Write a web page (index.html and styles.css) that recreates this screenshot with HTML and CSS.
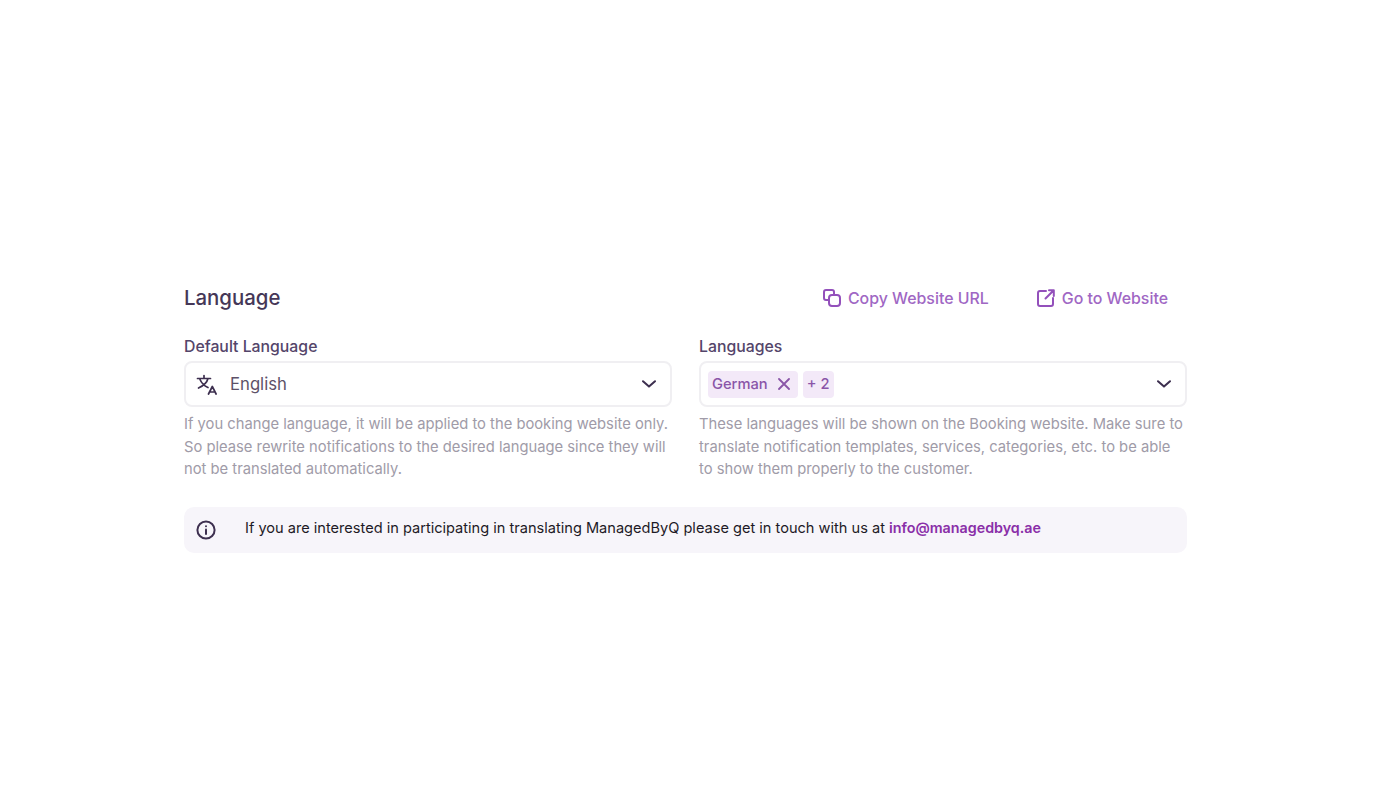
FILE: index.html
```html
<!DOCTYPE html>
<html lang="en">
<head>
    <meta charset="UTF-8">
    <meta name="viewport" content="width=device-width, initial-scale=1.0">
    <title>Language</title>
    <link rel="stylesheet" href="styles.css">
</head>
<body>
    <div class="container">
        <div class="header">
            <h1>Language</h1>
            <div class="header-links">
                <a class="link" href="#">
                    <svg width="20" height="20" viewBox="0 0 20 20" fill="none" stroke="currentColor" stroke-width="2" stroke-linejoin="round" stroke-linecap="round">
                        <path d="M12 6.5V4a2 2 0 0 0-2-2H4a2 2 0 0 0-2 2v6a2 2 0 0 0 2 2h2.5"/>
                        <rect x="7" y="7" width="11" height="11" rx="3"/>
                    </svg>
                    Copy Website URL
                </a>
                <a class="link" href="#">
                    <svg width="20" height="20" viewBox="0 0 20 20" fill="none" stroke="currentColor" stroke-width="2" stroke-linejoin="round" stroke-linecap="round">
                        <path d="M10 3H4a2 2 0 0 0-2 2v11a2 2 0 0 0 2 2h11a2 2 0 0 0 2-2v-6"/>
                        <path d="M9.5 10.5L17.5 2.5M13 2.2h4.8V8"/>
                    </svg>
                    Go to Website
                </a>
            </div>
        </div>

        <div class="columns">
            <div class="field">
                <label>Default Language</label>
                <div class="select">
                    <svg class="translate-icon" width="22" height="22" viewBox="0 0 22 22" fill="none" stroke="currentColor" stroke-width="1.7" stroke-linecap="round" stroke-linejoin="round">
                        <path d="M1.5 5.5h13M8 2.5v3M12 5.5C11 9.5 7 13 2.5 15M4 6.5c1.5 3.5 4.5 6.5 8 8"/>
                        <path d="M12.5 21l3.8-7.5 3.8 7.5M13.8 19h5"/>
                    </svg>
                    <span class="select-value">English</span>
                    <svg class="chevron" width="14" height="8" viewBox="0 0 14 8" fill="none" stroke="currentColor" stroke-width="2" stroke-linecap="round" stroke-linejoin="round">
                        <path d="M1 1.2l6 5.4 6-5.4"/>
                    </svg>
                </div>
                <p class="hint">If you change language, it will be applied to the booking website only. So please rewrite notifications to the desired language since they will not be translated automatically.</p>
            </div>

            <div class="field">
                <label>Languages</label>
                <div class="select select-tags">
                    <span class="tag">German
                        <svg width="12" height="12" viewBox="0 0 12 12" fill="none" stroke="currentColor" stroke-width="1.8" stroke-linecap="round">
                            <path d="M1 1l10 10M11 1L1 11"/>
                        </svg>
                    </span>
                    <span class="tag tag-more">+ 2</span>
                    <svg class="chevron" width="14" height="8" viewBox="0 0 14 8" fill="none" stroke="currentColor" stroke-width="2" stroke-linecap="round" stroke-linejoin="round">
                        <path d="M1 1.2l6 5.4 6-5.4"/>
                    </svg>
                </div>
                <p class="hint">These languages will be shown on the Booking website. Make sure to translate notification templates, services, categories, etc. to be able to show them properly to the customer.</p>
            </div>
        </div>

        <div class="banner">
            <svg width="20" height="20" viewBox="0 0 20 20" fill="none" stroke="currentColor" stroke-width="2" stroke-linecap="round">
                <circle cx="10" cy="10" r="8.6"/>
                <path d="M10 9.5v4.5"/>
                <path d="M10 6.2v.1"/>
            </svg>
            <span class="banner-text">If you are interested in participating in translating ManagedByQ please get in touch with us at <a href="#">info@managedbyq.ae</a></span>
        </div>
    </div>
</body>
</html>
```

FILE: styles.css
```css
body {
    font-family: Inter, "Liberation Sans", sans-serif;
    margin: 0;
    padding: 284px 213px 0 184px;
    background-color: #fff;
    color: #3a2a4a;
}

.header {
    display: flex;
    justify-content: space-between;
    align-items: center;
    height: 28px;
    padding-right: 19px;
    margin-bottom: 25px;
}

h1 {
    font-size: 20.4px;
    font-weight: 500;
    margin: 0;
    padding-bottom: 2px;
    color: #453757;
}

.header-links {
    display: flex;
    gap: 47px;
}

.link {
    display: flex;
    align-items: center;
    gap: 6px;
    font-size: 15.9px;
    font-weight: 500;
    color: #a067c4;
    text-decoration: none;
}

.link svg {
    color: #9350bb;
}

.columns {
    display: grid;
    grid-template-columns: 488px 488px;
    gap: 27px;
}

label {
    display: block;
    font-size: 15.8px;
    font-weight: 500;
    line-height: 20px;
    margin-bottom: 4px;
    color: #54456a;
}

.select {
    display: flex;
    align-items: center;
    height: 46px;
    box-sizing: border-box;
    border: 2px solid #f0eff2;
    border-radius: 8px;
    padding: 0 14px 0 10px;
    background: white;
}

.select-tags {
    padding-left: 7px;
    gap: 5px;
}

.translate-icon {
    color: #3d2f4f;
    margin-right: 12px;
}

.select-value {
    font-size: 16.7px;
    color: #5d5168;
}

.chevron {
    margin-left: auto;
    color: #3d2f4f;
}

.tag {
    display: flex;
    align-items: center;
    gap: 10px;
    height: 27px;
    padding: 0 8px 0 4px;
    border-radius: 4px;
    background: #f3e9f8;
    color: #8a55a8;
    font-size: 14.7px;
    font-weight: 500;
}

.tag-more {
    padding: 0 5px 0 4px;
}

.hint {
    font-size: 14.75px;
    line-height: 22.7px;
    margin: 6px 0 0;
    color: #a09ba8;
}

.banner {
    display: flex;
    align-items: center;
    gap: 29px;
    height: 46px;
    margin-top: 26px;
    padding-left: 12px;
    border-radius: 10px;
    background: #f7f5fa;
    color: #1e1a26;
    font-size: 14.58px;
}

.banner svg {
    color: #3d2f4f;
    flex: none;
}

.banner-text {
    margin-bottom: 4px;
}

.banner a {
    color: #8a2fa8;
    font-size: 14.3px;
    font-weight: 600;
    text-decoration: none;
}
```
